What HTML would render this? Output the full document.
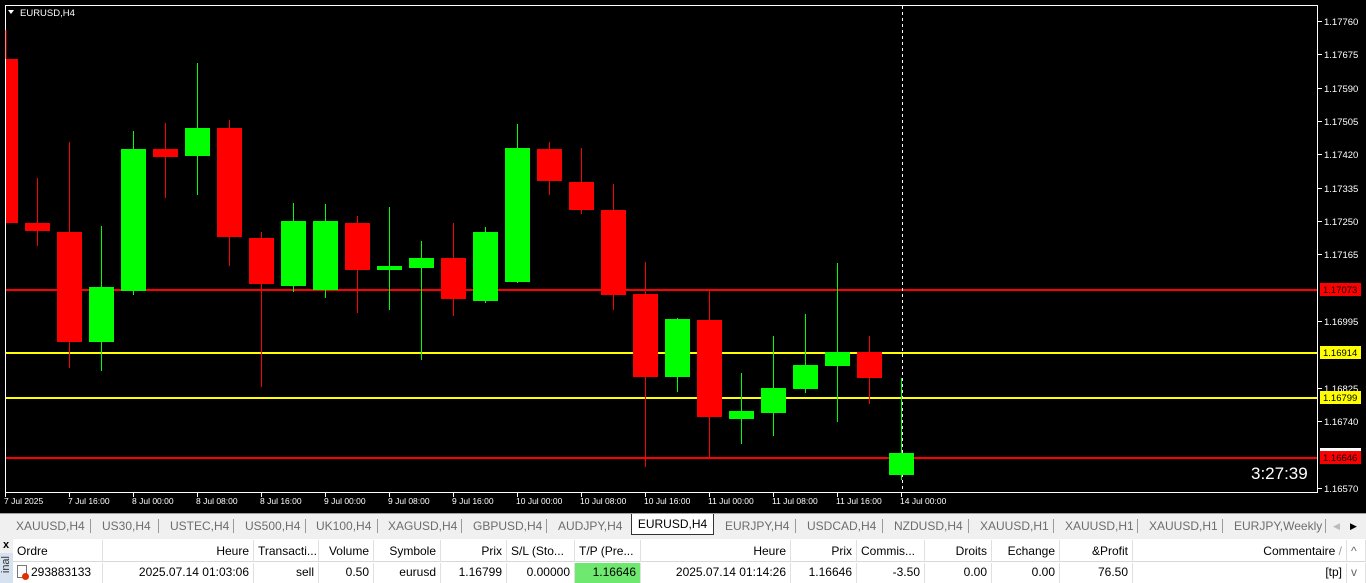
<!DOCTYPE html>
<html><head><meta charset="utf-8"><style>
*{margin:0;padding:0;box-sizing:border-box}
body{width:1366px;height:583px;overflow:hidden;background:#f0f0f0;font-family:"Liberation Sans",sans-serif;position:relative}
#chart{position:absolute;left:0;top:0;width:1366px;height:513px;background:#000}
#tabs{position:absolute;left:0;top:513px;width:1366px;height:25px;background:#f0f0f0;border-top:1px solid #a0a0a0;font-size:12px;color:#6d6d6d}
.tab{position:absolute;top:5px;white-space:nowrap}
.sep{position:absolute;top:5px;width:1px;height:14px;background:#9a9a9a}
#act{position:absolute;left:631px;top:0;width:83px;height:21px;background:#fff;border:1px solid #333;border-top:none;color:#000;font-size:12px;text-align:center;line-height:20px}
#tbl{position:absolute;left:13px;top:539px;width:1353px;height:44px;background:#fff;font-size:12px;color:#000}
.c{position:absolute;height:22px;line-height:22px;border-right:1px solid #e0e0e0;padding:0 4px;white-space:nowrap;overflow:hidden}
.h{top:1px;border-bottom:1px solid #d8d8d8}
.r{top:24px;line-height:18px;height:20px}
.rt{text-align:right}
#side{position:absolute;left:0;top:539px;width:13px;height:44px;background:#f0f0f0}
</style></head><body>
<div id="chart">
<svg width="1366" height="513" xmlns="http://www.w3.org/2000/svg" font-family="Liberation Sans, sans-serif">
<rect x="5.5" y="5.5" width="1312" height="487" fill="none" stroke="#fff" stroke-width="1"/>
<g stroke="#fff" stroke-width="1">
<line x1="1318" y1="21.5" x2="1322" y2="21.5"/><line x1="1318" y1="54.5" x2="1322" y2="54.5"/><line x1="1318" y1="88.5" x2="1322" y2="88.5"/><line x1="1318" y1="121.5" x2="1322" y2="121.5"/><line x1="1318" y1="154.5" x2="1322" y2="154.5"/><line x1="1318" y1="188.5" x2="1322" y2="188.5"/><line x1="1318" y1="221.5" x2="1322" y2="221.5"/><line x1="1318" y1="254.5" x2="1322" y2="254.5"/><line x1="1318" y1="321.5" x2="1322" y2="321.5"/><line x1="1318" y1="388.5" x2="1322" y2="388.5"/><line x1="1318" y1="421.5" x2="1322" y2="421.5"/><line x1="1318" y1="488.5" x2="1322" y2="488.5"/>
</g>
<g fill="#fff" font-size="9.5">
<text x="1324" y="25">1.17760</text><text x="1324" y="58">1.17675</text><text x="1324" y="92">1.17590</text><text x="1324" y="125">1.17505</text><text x="1324" y="158">1.17420</text><text x="1324" y="192">1.17335</text><text x="1324" y="225">1.17250</text><text x="1324" y="258">1.17165</text><text x="1324" y="325">1.16995</text><text x="1324" y="392">1.16825</text><text x="1324" y="425">1.16740</text><text x="1324" y="492">1.16570</text>
</g>
<rect x="1320" y="448" width="41" height="7" fill="#fff"/>
<line x1="6" y1="290" x2="1317" y2="290" stroke="#f00" stroke-width="2"/>
<line x1="6" y1="353" x2="1317" y2="353" stroke="#ff0" stroke-width="2"/>
<line x1="6" y1="398" x2="1317" y2="398" stroke="#ff0" stroke-width="2"/>
<line x1="6" y1="458" x2="1317" y2="458" stroke="#f00" stroke-width="2"/>
<rect x="1320" y="283" width="41" height="13" fill="#f00"/><text x="1323" y="293" font-size="9.5" fill="#000">1.17073</text>
<rect x="1320" y="346" width="41" height="13" fill="#ff0"/><text x="1323" y="356" font-size="9.5" fill="#000">1.16914</text>
<rect x="1320" y="391" width="41" height="13" fill="#ff0"/><text x="1323" y="401" font-size="9.5" fill="#000">1.16799</text>
<rect x="1320" y="451" width="41" height="13" fill="#f00"/><text x="1323" y="461" font-size="9.5" fill="#000">1.16646</text>
<line x1="902.5" y1="6" x2="902.5" y2="492" stroke="#fff" stroke-dasharray="3,3"/>
<g id="cd"></g>
<g stroke-width="1">
<line x1="6" y1="30" x2="6" y2="59" stroke="#f00"/>
<rect x="6" y="59" width="12" height="164" fill="#f00"/>
</g>
<text x="20" y="16" font-size="9.5" fill="#fff">EURUSD,H4</text>
<polygon points="8,10 14,10 11,14" fill="#fff"/>
<text x="1251" y="479" font-size="17" fill="#fff">3:27:39</text>
<g stroke="#fff"><line x1="5.5" y1="493" x2="5.5" y2="497"/><line x1="69.5" y1="493" x2="69.5" y2="497"/><line x1="133.5" y1="493" x2="133.5" y2="497"/><line x1="197.5" y1="493" x2="197.5" y2="497"/><line x1="261.5" y1="493" x2="261.5" y2="497"/><line x1="325.5" y1="493" x2="325.5" y2="497"/><line x1="389.5" y1="493" x2="389.5" y2="497"/><line x1="453.5" y1="493" x2="453.5" y2="497"/><line x1="517.5" y1="493" x2="517.5" y2="497"/><line x1="581.5" y1="493" x2="581.5" y2="497"/><line x1="645.5" y1="493" x2="645.5" y2="497"/><line x1="709.5" y1="493" x2="709.5" y2="497"/><line x1="773.5" y1="493" x2="773.5" y2="497"/><line x1="837.5" y1="493" x2="837.5" y2="497"/><line x1="901.5" y1="493" x2="901.5" y2="497"/></g>
<g fill="#fff" font-size="8.5">
<text x="4" y="504">7 Jul 2025</text><text x="68" y="504">7 Jul 16:00</text><text x="132" y="504">8 Jul 00:00</text><text x="196" y="504">8 Jul 08:00</text><text x="260" y="504">8 Jul 16:00</text><text x="324" y="504">9 Jul 00:00</text><text x="388" y="504">9 Jul 08:00</text><text x="452" y="504">9 Jul 16:00</text><text x="516" y="504">10 Jul 00:00</text><text x="580" y="504">10 Jul 08:00</text><text x="644" y="504">10 Jul 16:00</text><text x="708" y="504">11 Jul 00:00</text><text x="772" y="504">11 Jul 08:00</text><text x="836" y="504">11 Jul 16:00</text><text x="900" y="504">14 Jul 00:00</text>
</g>
</svg>
</div>
<div id="tabs">
<span class="tab" style="left:16px">XAUUSD,H4</span><span class="sep" style="left:90px"></span>
<span class="tab" style="left:102px">US30,H4</span><span class="sep" style="left:158px"></span>
<span class="tab" style="left:170px">USTEC,H4</span><span class="sep" style="left:233px"></span>
<span class="tab" style="left:245px">US500,H4</span><span class="sep" style="left:305px"></span>
<span class="tab" style="left:316px">UK100,H4</span><span class="sep" style="left:377px"></span>
<span class="tab" style="left:388px">XAGUSD,H4</span><span class="sep" style="left:461px"></span>
<span class="tab" style="left:473px">GBPUSD,H4</span><span class="sep" style="left:546px"></span>
<span class="tab" style="left:558px">AUDJPY,H4</span>
<div id="act">EURUSD,H4</div>
<span class="tab" style="left:725px">EURJPY,H4</span><span class="sep" style="left:795px"></span>
<span class="tab" style="left:807px">USDCAD,H4</span><span class="sep" style="left:882px"></span>
<span class="tab" style="left:894px">NZDUSD,H4</span><span class="sep" style="left:968px"></span>
<span class="tab" style="left:980px">XAUUSD,H1</span><span class="sep" style="left:1053px"></span>
<span class="tab" style="left:1065px">XAUUSD,H1</span><span class="sep" style="left:1137px"></span>
<span class="tab" style="left:1149px">XAUUSD,H1</span><span class="sep" style="left:1222px"></span>
<span class="tab" style="left:1234px">EURJPY,Weekly</span><span class="sep" style="left:1325px"></span>
<span class="tab" style="left:1333px;color:#bbb;font-size:9px;top:7px">◀</span><span class="tab" style="left:1350px;color:#000;font-size:9px;top:7px">▶</span>
</div>
<div id="side"><div style="font-size:11px;font-weight:bold;position:absolute;left:3px;top:0">x</div>
<div style="position:absolute;left:0;top:14px;width:13px;height:30px;background:#d7e2f0;overflow:hidden">
<div style="position:absolute;left:0;top:3px;width:13px;font-size:11px;color:#333;writing-mode:vertical-rl;transform:rotate(180deg);line-height:13px;white-space:nowrap;direction:rtl">inal</div></div></div>
<div id="tbl">
<div class="c h" style="left:0;width:90px">Ordre</div>
<div class="c h rt" style="left:90px;width:151px">Heure</div>
<div class="c h" style="left:241px;width:65px">Transacti...</div>
<div class="c h rt" style="left:306px;width:55px">Volume</div>
<div class="c h rt" style="left:361px;width:67px">Symbole</div>
<div class="c h rt" style="left:428px;width:66px">Prix</div>
<div class="c h" style="left:494px;width:68px">S/L (Sto...</div>
<div class="c h" style="left:562px;width:66px">T/P (Pre...</div>
<div class="c h rt" style="left:628px;width:150px">Heure</div>
<div class="c h rt" style="left:778px;width:66px">Prix</div>
<div class="c h" style="left:844px;width:68px">Commis...</div>
<div class="c h rt" style="left:912px;width:67px">Droits</div>
<div class="c h rt" style="left:979px;width:68px">Echange</div>
<div class="c h rt" style="left:1047px;width:73px">&amp;Profit</div>
<div class="c h rt" style="left:1120px;width:214px">Commentaire <span style="color:#999">/</span></div>
<div class="c h" style="left:1334px;width:19px;color:#666">^</div>
<div class="c r" style="left:0;width:90px"><span style="display:inline-block;width:10px;height:13px;border:1px solid #777;vertical-align:-2px;margin-right:4px;position:relative"><span style="position:absolute;left:4px;top:7px;width:7px;height:7px;border-radius:50%;background:#e03000"></span></span>293883133</div>
<div class="c r rt" style="left:90px;width:151px">2025.07.14 01:03:06</div>
<div class="c r rt" style="left:241px;width:65px">sell</div>
<div class="c r rt" style="left:306px;width:55px">0.50</div>
<div class="c r rt" style="left:361px;width:67px">eurusd</div>
<div class="c r rt" style="left:428px;width:66px">1.16799</div>
<div class="c r rt" style="left:494px;width:68px">0.00000</div>
<div class="c r rt" style="left:562px;width:66px;background:#6ee86e">1.16646</div>
<div class="c r rt" style="left:628px;width:150px">2025.07.14 01:14:26</div>
<div class="c r rt" style="left:778px;width:66px">1.16646</div>
<div class="c r rt" style="left:844px;width:68px">-3.50</div>
<div class="c r rt" style="left:912px;width:67px">0.00</div>
<div class="c r rt" style="left:979px;width:68px">0.00</div>
<div class="c r rt" style="left:1047px;width:73px">76.50</div>
<div class="c r rt" style="left:1120px;width:214px">[tp]</div>
<div class="c r" style="left:1334px;width:19px;color:#666">v</div>
</div>
<script>
var d=[[37,'r',223,231,178,246],[69,'r',232,342,142,368],[101,'g',287,342,226,371],[133,'g',149,291,131,295],[165,'r',149,157,123,198],[197,'g',128,156,63,195],[229,'r',128,237,120,266],[261,'r',238,284,232,387],[293,'g',221,286,203,292],[325,'g',221,290,204,298],[357,'r',223,270,216,313],[389,'g',266,270,207,310],[421,'g',258,268,241,360],[453,'r',258,299,223,316],[485,'g',232,301,227,303],[517,'g',148,282,124,283],[549,'r',149,181,142,195],[581,'r',182,210,148,214],[613,'r',210,295,184,310],[645,'r',294,377,262,467],[677,'g',319,377,318,392],[709,'r',320,417,291,457],[741,'g',411,419,373,444],[773,'g',388,413,336,436],[805,'g',365,389,314,393],[837,'g',352,366,263,422],[869,'r',352,378,336,404],[901,'g',453,475,378,480]];
var s='';d.forEach(function(c){var col=c[1]=='r'?'#f00':'#0f0';s+='<line x1="'+(c[0]+.5)+'" y1="'+c[4]+'" x2="'+(c[0]+.5)+'" y2="'+c[5]+'" stroke="'+col+'"/><rect x="'+(c[0]-12)+'" y="'+c[2]+'" width="25" height="'+(c[3]-c[2])+'" fill="'+col+'"/>';});
document.getElementById('cd').innerHTML=s;
</script>
</body></html>
